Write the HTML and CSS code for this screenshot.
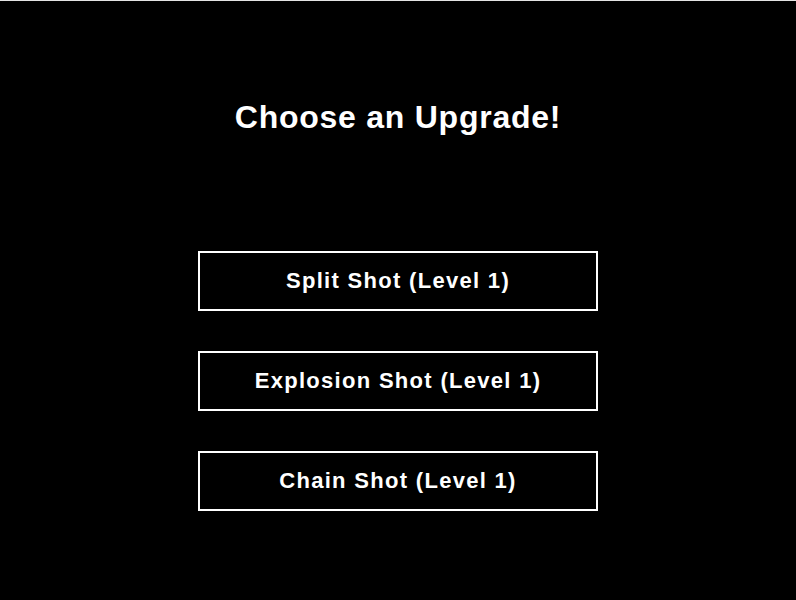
FILE: index.html
```html
<!DOCTYPE html>
<html>
<head>
<meta charset="utf-8">
<link rel="stylesheet" href="styles.css">
</head>
<body>
<div class="screen">
  <h1 class="title">Choose an Upgrade!</h1>
  <div class="options">
    <button class="option">Split Shot (Level 1)</button>
    <button class="option">Explosion Shot (Level 1)</button>
    <button class="option">Chain Shot (Level 1)</button>
  </div>
</div>
</body>
</html>
```
FILE: styles.css
```css
html, body {
  margin: 0;
  padding: 0;
  background: #000;
}
.screen {
  width: 796px;
  height: 600px;
  box-sizing: border-box;
  border-top: 1px solid #e4e4e4;
  background: #000;
  display: flex;
  flex-direction: column;
  align-items: center;
  font-family: "Liberation Sans", Arial, sans-serif;
  color: #fff;
}
.title {
  margin: 98px 0 0;
  font-size: 32px;
  font-weight: bold;
  line-height: 37px;
  letter-spacing: 0.75px;
}
.options {
  margin-top: 115px;
  display: flex;
  flex-direction: column;
  gap: 40px;
}
.option {
  width: 400px;
  height: 60px;
  box-sizing: border-box;
  border: 2px solid #fff;
  background: #000;
  color: #fff;
  font-family: "Liberation Sans", Arial, sans-serif;
  font-size: 22px;
  font-weight: bold;
  letter-spacing: 1.3px;
  padding: 0;
}
```
